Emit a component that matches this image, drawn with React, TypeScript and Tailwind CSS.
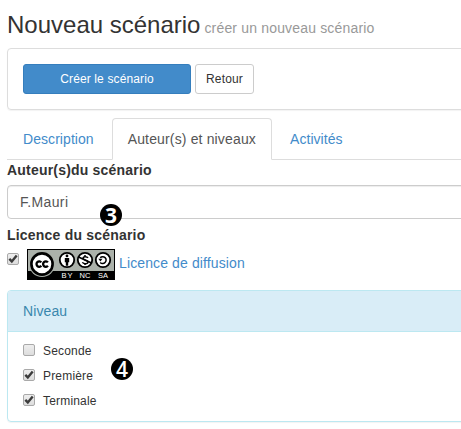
import { useState } from "react";
import clsx from "clsx";

const tabs = ["Description", "Auteur(s) et niveaux", "Activités"];

function CheckBox({ checked, onChange, label }: { checked: boolean; onChange: () => void; label: string }) {
  return (
    <button
      type="button"
      role="checkbox"
      aria-checked={checked}
      aria-label={label}
      onClick={onChange}
      className="block h-3 w-3 shrink-0 rounded-[2px] border border-[#a9a9a9] bg-linear-to-b from-[#eeeeee] to-[#dddddd]"
    >
      {checked && (
        <svg viewBox="0 0 10 10" className="block h-2.5 w-2.5" fill="none" stroke="#3c3c3c" strokeWidth="2.4">
          <path d="M1.3 4.9 3.8 7.4 8.7 1.5" />
        </svg>
      )}
    </button>
  );
}

function LicenceBadge() {
  return (
    <svg width="88" height="31" viewBox="0 0 88 31" className="block shrink-0" aria-label="CC BY-NC-SA">
      <rect width="88" height="31" fill="#000" />
      <rect x="1" y="1" width="86" height="21" fill="#abb1aa" />
      <circle cx="15" cy="15" r="13" fill="#abb1aa" />
      <circle cx="15" cy="15" r="10.6" fill="#fff" stroke="#000" strokeWidth="2.6" />
      <g fill="none" stroke="#000" strokeWidth="2.3">
        <path d="M14.3 13.4A2.7 2.7 0 1 0 14.3 16.8" />
        <path d="M20.9 13.4A2.7 2.7 0 1 0 20.9 16.8" />
      </g>
      <g fill="#fff" stroke="#000" strokeWidth="1.8">
        <circle cx="40" cy="11" r="7.2" />
        <circle cx="58" cy="11" r="7.2" />
        <circle cx="76" cy="11" r="7.2" />
      </g>
      <circle cx="40" cy="6.9" r="1.4" />
      <path d="M37.8 9h4.4v4.2h-1v3.6h-2.4v-3.6h-1z" />
      <g fill="none" stroke="#000" strokeWidth="1.5">
        <path d="M61 8.8C60 7.2 56 7.2 56 9.3S61 11 61 13s-4.6 2.4-5.6.3M58 6v1.5M58 14.5V16" />
        <path d="M51.5 8 64.5 14" />
        <path d="M73.2 8.8A3.4 3.4 0 1 1 73.2 13.4" />
        <path d="M71.3 9.8h4.2L73.4 12.6z" fill="#000" stroke="none" />
      </g>
      <g fill="#fff" fontFamily="Liberation Sans, sans-serif" fontSize="7.5">
        <text x="34.5" y="29" textLength="11">BY</text>
        <text x="52.5" y="29" textLength="11">NC</text>
        <text x="71" y="29" textLength="10">SA</text>
      </g>
    </svg>
  );
}

function StepMarker({ step, className }: { step: number; className: string }) {
  return (
    <span
      className={clsx(
        "absolute flex h-[22px] w-[22px] items-center justify-center rounded-full bg-black font-['Open_Sans',sans-serif] text-[21px] leading-none text-white",
        className
      )}
    >
      {step}
    </span>
  );
}

export default function App() {
  const [activeTab, setActiveTab] = useState(tabs[1]);
  const [author, setAuthor] = useState("F.Mauri");
  const [licence, setLicence] = useState(true);
  const [levels, setLevels] = useState([
    { name: "Seconde", checked: false },
    { name: "Première", checked: true },
    { name: "Terminale", checked: true },
  ]);

  const toggleLevel = (name: string) =>
    setLevels(levels.map((l) => (l.name === name ? { ...l, checked: !l.checked } : l)));

  return (
    <div className="relative h-[429px] overflow-hidden bg-white pl-[7px] font-['Liberation_Sans',Arial,sans-serif] text-sm text-[#333]">
      <div className="w-[500px]">
        <h1 className="flex h-12 items-baseline gap-1 pt-[11px] text-2xl leading-7 whitespace-nowrap">
          Nouveau scénario
          <small className="text-sm tracking-[0.17px] text-[#999]">créer un nouveau scénario</small>
        </h1>

        <div className="flex h-[62px] gap-1 rounded border border-[#ddd] p-[15px] shadow-[0_1px_1px_rgba(0,0,0,0.05)]">
          <button className="h-[30px] w-[168px] rounded-[3px] border border-[#357ebd] bg-[#428bca] text-xs tracking-[0.13px] text-white">
            Créer le scénario
          </button>
          <button className="h-[30px] w-[59px] rounded-[3px] border border-[#ccc] bg-white text-xs tracking-[0.15px]">
            Retour
          </button>
        </div>

        <nav className="mt-2 flex h-[42px] border-b border-[#ddd]">
          {tabs.map((tab) => (
            <button
              key={tab}
              onClick={() => setActiveTab(tab)}
              className={clsx(
                "mr-0.5 h-[42px] rounded-t border px-[15px] leading-5 whitespace-nowrap",
                tab === activeTab
                  ? "border-[#ddd] border-b-white bg-white tracking-[0.15px] text-[#555]"
                  : "border-transparent tracking-[0.06px] text-[#428bca]"
              )}
            >
              {tab}
            </button>
          ))}
        </nav>

        <label className="block h-[25px] leading-5 font-bold tracking-[0.2px]" htmlFor="author">
          Auteur(s)du scénario
        </label>
        <input
          id="author"
          value={author}
          onChange={(e) => setAuthor(e.target.value)}
          className="block h-[34px] w-full rounded border border-[#ccc] px-3 tracking-[0.35px] text-[#555] shadow-[inset_0_1px_1px_rgba(0,0,0,0.075)]"
        />
        <div className="mt-[6px] h-6 leading-5 font-bold tracking-[0.2px]">Licence du scénario</div>
        <div className="flex h-[31px]">
          <div className="mr-2 pt-1">
            <CheckBox checked={licence} onChange={() => setLicence(!licence)} label="Licence" />
          </div>
          <LicenceBadge />
          <a href="#licence" className="ml-1 pt-1 leading-5 tracking-[0.12px] text-[#428bca]">
            Licence de diffusion
          </a>
        </div>

        <section className="mt-2.5 h-[132px] rounded border border-[#bce8f1] shadow-[0_1px_1px_rgba(0,0,0,0.05)]">
          <h2 className="h-[41px] rounded-t-[3px] border-b border-[#bce8f1] bg-[#d9edf7] px-[15px] py-2.5 leading-5 tracking-[0.1px] text-[#3a87ad]">
            Niveau
          </h2>
          <div className="px-[15px] pt-[6px] text-xs tracking-[0.18px]">
            {levels.map((level) => (
              <div key={level.name} className="flex h-[25px] gap-2 pt-1.5">
                <CheckBox checked={level.checked} onChange={() => toggleLevel(level.name)} label={level.name} />
                <span className="leading-[14px]">{level.name}</span>
              </div>
            ))}
          </div>
        </section>
      </div>
      <StepMarker step={3} className="top-[204px] left-[100px] font-bold" />
      <StepMarker step={4} className="top-[358px] left-[111px] font-semibold" />
    </div>
  );
}
